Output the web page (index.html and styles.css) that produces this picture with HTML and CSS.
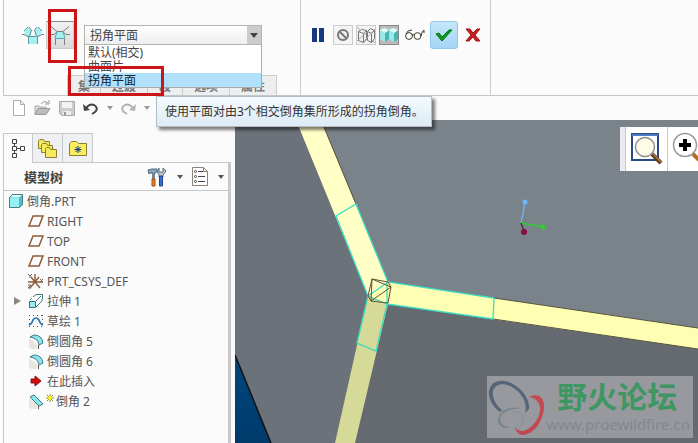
FILE: index.html
```
<!DOCTYPE html>
<html lang="zh-CN">
<head>
<meta charset="utf-8">
<title>倒角.PRT</title>
<link rel="stylesheet" href="styles.css">
</head>

<body>
<div id="main">

<!-- ribbon -->
<div class="ribbon">
	<div class="panel">
		<div class="controls">
			<button class="tool corner" title="默认">
				<svg width="22" height="18" viewBox="0 0 22 18"><g fill="#a5f0f2"><path d="M2 5l4-4 4 4-2 6-4-1z"/><path d="M20 5l-4-4-4 4 2 6 4-1z"/><path d="M7 10h8v8H7z"/></g><g fill="none" stroke="#5d9aa0"><path d="M2 5l4-4M20 5l-4-4M6.500 10.500h8M6.500 10v8M15.500 10v8M9 5L7.500 10M13 5l1.500 5"/><path d="M0 8.500h2l4 2M22 8.500h-2l-4 2M7 1l3 4M15 1l-3 4" stroke="#6c8286"/></g></svg>
			</button>
			<button class="tool pressed" title="拐角">
				<svg width="20" height="20" viewBox="0 0 20 20"><path d="M7 7h6l3 6H4z" fill="#a5f0f2"/><g fill="none" stroke="#7b7f80"><path d="M1 1.500l6 5h6l6-5"/><path d="M0 9.500h4l3-2.500M20 9.500h-4L13 7"/><path d="M5.500 20v-6.500h9V20"/></g><path d="M7 7l-2 6M13 7l2 6M6 13.500h8" stroke="#58a9b0"/></svg>
			</button>
			<div class="combo">
				<select aria-label="过渡类型">
					<option>拐角平面</option>
					<option>默认(相交)</option>
					<option>曲面片</option>
				</select>
				<ul class="list" role="listbox" aria-label="过渡类型列表">
					<li role="option">默认(相交)</li>
					<li role="option">曲面片</li>
					<li role="option" class="on" aria-selected="true">拐角平面</li>
				</ul>
			</div>
		</div>
		<div class="tabs">
			<button>集</button><button>过渡</button><button>段</button><button>选项</button><button>属性</button>
		</div>
	</div>
	<div class="panel actions">
		<button class="tool wide" title="暂停"><svg width="12" height="14"><path d="M0 0h5v14H0zM7 0h5v14H7z" fill="#15387f"/></svg></button>
		<button class="tool box" title="无预览"><svg width="14" height="14" viewBox="0 0 14 14"><g fill="none" stroke="#777" stroke-width="2"><circle cx="7" cy="7" r="5"/><path d="M3.500 3.500l7 7"/></g></svg></button>
		<button class="tool box" title="分离"><svg width="18" height="18" viewBox="0 0 18 18"><g fill="none" stroke="#777"><path d="M1.500 5.500l3-2 5 1v9l-3 3-5-2zM1.500 5.500l5 2 3-3M6.500 7.500v9M10.500 5.500l3-3 4 2v8l-3 4-4-2zM10.500 5.500l4 2 3-3M14.500 7.500v9"/><path d="M0 15l10-9M8 14L18 3M0 1l3 3M15 14l3 3" stroke="#aaa"/></g></svg></button>
		<button class="tool box down" title="附加"><svg width="18" height="16" viewBox="0 0 18 16"><path d="M0 3l5 3v9l-5-3zM9 3l5 3v9l-5-3z" fill="#9fe6e6"/><path d="M5 6l4-3v9l-4 3zM14 6l4-3v9l-4 3z" fill="#43b7b3"/><path d="M0 3l4-2 5 2-4 3zM9 3l4-2 5 2-4 3z" fill="#e2ffff"/></svg></button>
		<button class="tool glass" title="预览"><svg width="20" height="14" viewBox="0 0 20 14"><g fill="none" stroke="#3d3a25"><circle cx="4" cy="8" r="3.400"/><circle cx="12.500" cy="8" r="3.400"/><path d="M7 7q1-1 2 0M1 6q1-4 6-4M16 8q1-5 3-6v3"/></g></svg></button>
		<button class="tool ok" title="确定"><svg width="18" height="14" viewBox="0 0 18 14"><path d="M1 6l3-1 3 4 7-7 3 0-10 11z" fill="#0b9a20" stroke="#057412"/></svg></button>
		<button class="tool wide" title="取消"><svg width="16" height="14" viewBox="0 0 16 14"><path d="M1 1h4l3 4 4-4h3l-5 6 5 6h-4l-3-4-4 4H1l5-6z" fill="#c9211e" stroke="#a01414"/></svg></button>
	</div>
	<div class="panel"></div>
	<span class="mark mark1"></span>
	<span class="mark mark2"></span>
	<div class="tip" role="tooltip">使用平面对由3个相交倒角集所形成的拐角倒角。</div>
</div>

<!-- quick access -->
<div class="quick">
	<button class="tool" title="新建"><svg width="14" height="16" viewBox="0 0 14 16"><path d="M1.500 .5h7l4 4v11h-11zM8.500 .5v4h4" fill="#fff" stroke="#aaa"/></svg></button>
	<button class="tool" title="打开"><svg width="17" height="16" viewBox="0 0 17 16"><path d="M1 14V6h4l1 1h6v2" fill="#ddd" stroke="#aaa"/><path d="M1 14.500l3-6h12l-4 6z" fill="#bbb" stroke="#999"/><path d="M7 4q3-4 7-1M15 0v4h-4" fill="none" stroke="#999"/></svg></button>
	<button class="tool" title="保存"><svg width="16" height="16" viewBox="0 0 16 16"><path d="M.5 1.500h15v14H3l-2.500-2z" fill="#ccc" stroke="#aaa"/><path d="M3 2h10v6H3z" fill="#f3f3f3"/><path d="M4 11h8v4H4z" fill="#eee"/><path d="M5 12h2v3H5z" fill="#999"/></svg></button>
	<button class="tool" title="撤消"><svg width="16" height="13" viewBox="0 0 16 13"><path d="M3 6q4-5 8-3 5 3 1 7l-3 2" fill="none" stroke="#444" stroke-width="2"/><path d="M0 2l1 7 6-1z" fill="#444"/></svg></button>
	<button class="drop" title="撤消列表"></button>
	<button class="tool" title="重做"><svg width="16" height="13" viewBox="0 0 16 13"><path d="M13 6q-4-5-8-3-5 3-1 7l3 2" fill="none" stroke="#b4b4b4" stroke-width="2"/><path d="M16 2l-1 7-6-1z" fill="#b4b4b4"/></svg></button>
	<button class="drop" title="重做列表"></button>
</div>

<div class="work">

<!-- model tree -->
<div class="side">
	<div class="sidetabs">
		<button class="cur" title="模型树"><svg width="14" height="19" viewBox="0 0 14 19"><path d="M1.500.5h4v4h-4zM1.500 7.500h4v4h-4zM1.500 14.500h4v4h-4zM9.500 7.500h4v4h-4zM3.500 4.500v3M3.500 11.500v3M5.500 9.500h4" fill="#fff" stroke="#444"/></svg></button>
		<button title="文件夹浏览器"><svg width="19" height="19" viewBox="0 0 19 19"><g fill="#f5ea5c" stroke="#8c8128"><path d="M.5 9.500v-8l1-1h4l1 2h5v7z"/><path d="M3.500 13.500v-8l1-1h4l1 2h5v7z"/><path d="M7.500 18.500v-9l1-1h3l1 2h6v8z"/></g></svg></button>
		<button title="收藏夹"><svg width="18" height="15" viewBox="0 0 18 15"><path d="M.5 14.500v-12l2-2h5l2 2h8v12z" fill="#f7ee62" stroke="#8c8128"/><path d="M9 5v7M5.500 8.500h7M6.500 6l5 5M11.500 6l-5 5" stroke="#173b7c"/></svg></button>
	</div>
	<div class="treebox">
		<div class="treehead">
			<b>模型树</b>
			<button class="tool" title="设置"><svg width="20" height="20" viewBox="0 0 20 20"><path d="M1 3l4-1h5l1 3H8v2H5V5L2 7z" fill="#8caabf" stroke="#4f6676"/><path d="M5 7h3v5H5z" fill="#74889a"/><path d="M5 12h3v7H5z" fill="#e38322" stroke="#a44d1b"/><path d="M12 1v4h4V1l3 3-3 4v2h-4V8L10 4z" fill="#b8c6d0" stroke="#5a6d7a"/><path d="M12.500 9h3v10h-3z" fill="#386ed0" stroke="#27438c"/></svg></button>
			<button class="drop" title="设置列表"></button>
			<button class="tool" title="显示"><svg width="16" height="19" viewBox="0 0 16 19"><path d="M.5.5h11l4 4v14H.5zM11.500.5v4h4" fill="#fff" stroke="#8c8478"/><path d="M6 4.500h5M6 9.500h7M6 14.500h7" stroke="#444"/><g fill="none" stroke="#444"><circle cx="3.500" cy="4.500" r="1"/><circle cx="3.500" cy="9.500" r="1"/><circle cx="3.500" cy="14.500" r="1"/></g></svg></button>
			<button class="drop" title="显示列表"></button>
		</div>
		<ul class="tree">
			<li class="root"><svg width="14" height="14" viewBox="0 0 14 14"><path d="M.5 3.500l3-3h10v10l-3 3H.5z" fill="#51bcc4" stroke="#467e85"/><path d="M1 4h9v9H1z" fill="#93f0f4"/><path d="M1 3.500l3-2.500h9l-3 2.500z" fill="#ddffff"/></svg>倒角.PRT</li>
			<li><svg width="16" height="14" viewBox="0 0 16 14"><path d="M1 12L5 2h10l-4 10z" fill="none" stroke="#8d5b38" stroke-width="1.500"/></svg>RIGHT</li>
			<li><svg width="16" height="14" viewBox="0 0 16 14"><path d="M1 12L5 2h10l-4 10z" fill="none" stroke="#8d5b38" stroke-width="1.500"/></svg>TOP</li>
			<li><svg width="16" height="14" viewBox="0 0 16 14"><path d="M1 12L5 2h10l-4 10z" fill="none" stroke="#8d5b38" stroke-width="1.500"/></svg>FRONT</li>
			<li><svg width="16" height="16" viewBox="0 0 16 16"><g fill="none" stroke="#8d5b38" stroke-width="1.400"><path d="M7 9V1M0 9h15M2 15l9-11M3 4l9 11"/></g><path d="M0 1l2 2 2-2M2 3v2M12 6l3 3M15 6l-3 3M0 12h3l-3 3h3" fill="none" stroke="#665"/></svg>PRT_CSYS_DEF</li>
			<li><i class="more"></i><svg width="16" height="16" viewBox="0 0 16 16"><path d="M1.500 8.500h6v6h-6z" fill="#9deaf0" stroke="#24747c"/><path d="M2 7l2-2M8 14l6-6V6M8 8l5-5M5 4l3-2.500h6.500V6" fill="none" stroke="#4a777b"/></svg>拉伸 1</li>
			<li><svg width="16" height="14" viewBox="0 0 16 14"><path d="M1 1.500h14M1 12.500h14M1.500 1v12M14.500 1v12" stroke="#456" stroke-dasharray="1 3"/><path d="M1 11q3-1 4-5 3-4 6 0 1 4 4 5" fill="none" stroke="#2775b4" stroke-width="1.600"/></svg>草绘 1</li>
			<li><svg width="16" height="15" viewBox="0 0 16 15"><path d="M1 4l8 6v5H3l-2-2z" fill="#e8e6dc"/><path d="M2 3l4-2q8 0 9 8l-4 2Q10 4 2 3z" fill="#8ce5ec" stroke="#3f7c84"/><path d="M10.500 11v4" stroke="#555"/></svg>倒圆角 5</li>
			<li><svg width="16" height="15" viewBox="0 0 16 15"><path d="M1 4l8 6v5H3l-2-2z" fill="#e8e6dc"/><path d="M2 3l4-2q8 0 9 8l-4 2Q10 4 2 3z" fill="#8ce5ec" stroke="#3f7c84"/><path d="M10.500 11v4" stroke="#555"/></svg>倒圆角 6</li>
			<li><svg width="16" height="12" viewBox="0 0 16 12"><path d="M3 4h4V1l6 5-6 5V8H3z" fill="#d30d0d" stroke="#8c1010"/></svg>在此插入</li>
			<li class="tight"><svg width="16" height="15" viewBox="0 0 16 15"><path d="M1 4l8 6v5H3l-2-2z" fill="#e8e6dc"/><path d="M2 3l4-2 9 9-4 2z" fill="#8ce5ec" stroke="#3f7c84"/><path d="M10.500 11v4" stroke="#555"/></svg><svg class="new" width="8" height="8" viewBox="0 0 8 8"><path d="M4 0v8M0 4h8M1 1l6 6M7 1L1 7" stroke="#8f8a12"/><circle cx="4" cy="4" r="2" fill="#fff21a"/></svg>倒角 2</li>
		</ul>
	</div>
</div>

<!-- graphics window -->
<div class="view">
	<svg class="scene" viewBox="235 120 463 323" preserveAspectRatio="xMidYMid slice">
		<defs>
			<linearGradient id="sea" x1="0" y1="0" x2="0" y2="1"><stop offset="0" stop-color="#00487f"/><stop offset="1" stop-color="#003a6b"/></linearGradient>
		</defs>
		<path d="M235 120h463v323H235z" fill="#6c7279"/>
		<path d="M310 120h388v218L380 292z" fill="#7b838a"/>
		<path d="M378 292l320 46v105H345z" fill="#646a70"/>
		<path d="M235 355l36 88h-36z" fill="url(#sea)"/>
		<path d="M235 355l36 88" stroke="#111" stroke-width="1.500"/>
		<path d="M296 120h25l66 160 1 12-20 4z" fill="#ffffc6"/>
		<path d="M387 282l311 46v21l-311-45-18-8z" fill="#ffffb4"/>
		<path d="M368 296l20 8-33 139h-20z" fill="#d6da98"/>
		<path d="M321 120l35 84M494 298l204 30M493 319l205 30" stroke="#55543f" fill="none"/>
		<g fill="none" stroke="#3cdcc4" stroke-width="1.300">
			<path d="M368 296l-32-80 20-12 32 78 106 16-1 21-106-15-11 47-19-8z"/>
			<path d="M368 296l20-14M368 296l19 8V282"/>
		</g>
		<path d="M372 279l19 8-3 16-17-2-3-5zM372 279l-1 22 20-14M372 279l16 3 3 5" fill="none" stroke="#5f5135"/>
		<g stroke-width="1.300">
			<path d="M521 223l4-20" stroke="#6db7f5"/><circle cx="525" cy="202" r="2.500" fill="#6db7f5"/>
			<path d="M521 223l22 4" stroke="#2ed02e"/><circle cx="543" cy="227" r="2.500" fill="#2ed02e"/>
			<path d="M521 223l3 8" stroke="#333"/><circle cx="524" cy="232" r="3" fill="#8e0a46"/>
		</g>
	</svg>
	<div class="viewbar">
		<button title="重新调整"><svg width="34" height="34" viewBox="0 0 34 34"><path d="M2 2h26v26H2z" fill="#fff" stroke="#274a86" stroke-width="2"/><path d="M2 2h26v2H2z" fill="#4e79c4"/><path d="M22 22l9 9" stroke="#5d3a1c" stroke-width="4"/><path d="M23 22l8 8" stroke="#b07b45" stroke-width="1.500"/><circle cx="15" cy="15" r="9.500" fill="#fffdea" stroke="#8f8f8f" stroke-width="1.500"/></svg></button>
		<button title="放大"><svg width="34" height="34" viewBox="0 0 34 34"><path d="M21 22l9 9" stroke="#b06f24" stroke-width="4"/><circle cx="13" cy="13" r="11.500" fill="#fff" stroke="#999" stroke-width="1.500"/><path d="M13 7v12M7 13h12" stroke="#000" stroke-width="4"/></svg></button>
	</div>
	<div class="logo">
		<svg width="58" height="58" viewBox="0 0 58 58">
			<path fill="#566577" fill-rule="evenodd" d="M1 13C3 2 14 0 25 6c11 6 17 17 16 25l-4 4c3-10-3-20-13-26C15 4 7 6 5 13c-1 7 3 14 9 19l-2 2C4 28 0 20 1 13z"/>
			<path fill="#bf4a50" d="M41 19c8-4 15-1 15 9 0 15-11 29-21 29-4 0-7-3-8-8 3 4 7 5 11 3 9-4 15-15 14-23-1-6-5-9-11-10z"/>
			<path fill="#75878c" d="M33 31c-8-1-17 2-20 7-3 6 2 11 10 11-8 3-14-2-13-8 2-9 13-14 23-10z"/>
			<path d="M24 34q10-2 11 7 0 6-4 9" fill="none" stroke="#84918f"/>
		</svg>
		<div><strong>野火论坛</strong><span>www.proewildfire.cn</span></div>
	</div>
</div>

</div>
</div>
</body>
</html>
```
FILE: styles.css
```
html, body {
	margin: 0;
	padding: 0;
	height: 100%;
}
body {
	font-family: "Noto Sans", "Noto Sans CJK SC", sans-serif;
	font-size: 12px;
	color: #555;
	background: #fbfbfb;
	overflow: hidden;
}
button {
	font-family: inherit;
	font-size: 12px;
	margin: 0;
	padding: 0;
	border: 0;
	background: none;
	color: #555;
}
button, .tree li {
	display: flex;
	align-items: center;
	justify-content: center;
}
svg {
	flex: none;
}
ul {
	list-style: none;
	margin: 0;
	padding: 0;
}
#main {
	display: flex;
	flex-direction: column;
	height: 100%;
}

/* ribbon */
.ribbon {
	position: relative;
	display: grid;
	grid-template-columns: 297px 190px 1fr;
	height: 95px;
	margin-left: 3px;
	border-left: 1px solid #c4c8c8;
	border-bottom: 1px solid #c4c8c8;
}
.panel {
	display: flex;
	flex-direction: column;
	justify-content: space-between;
	border-right: 1px solid #ccc;
}
.panel:nth-child(3) {
	border-right: 0;
}
.controls {
	display: flex;
	align-items: center;
	height: 28px;
	padding: 21px 0 0 16px;
}
.corner {
	width: 26px;
}
.pressed {
	width: 28px;
	height: 28px;
	margin-right: 10px;
	border: 1px solid #ccc;
	border-top: 1px solid #888;
	background: linear-gradient(#f2f2f2, #d9d9d9);
}
.combo {
	position: relative;
	width: 178px;
}
.combo select {
	display: block;
	appearance: none;
	width: 100%;
	height: 20px;
	padding: 0 0 0 5px;
	border: 1px solid #b4b4b4;
	border-radius: 0;
	font-family: inherit;
	font-size: 12px;
	color: #444;
	background: linear-gradient(#ccc, #ccc) right / 14px 100% no-repeat, linear-gradient(#fff, #eee);
}
.combo:after {
	content: "";
	position: absolute;
	right: 4px;
	top: 8px;
	border: 4px solid transparent;
	border-top: 5px solid #444;
	border-bottom: 0;
}
.list {
	position: absolute;
	z-index: 2;
	top: 20px;
	left: 0;
	right: 0;
	border: 1px solid #aaa;
	border-top: 0;
	background: #fff;
	color: #444;
}
.list li {
	height: 14px;
	line-height: 15px;
	padding-left: 3px;
}
.list .on {
	background: #b0e0fa;
	color: #123;
}
.tabs {
	display: flex;
	margin-left: 63px;
}
.tabs button {
	height: 20px;
	padding: 0 11px;
	border: 1px solid #ccc;
	border-width: 1px 1px 0 0;
	background: #eceeef;
	font-weight: bold;
	color: #777;
}
.tabs button:first-child {
	padding: 0 10px;
	border-left-width: 1px;
}
.actions {
	flex-direction: row;
	justify-content: flex-start;
	align-items: center;
	gap: 3px;
	height: 28px;
	padding: 21px 0 46px 5px;
}
.wide {
	width: 24px;
}
.box {
	width: 20px;
	height: 20px;
	border: 1px solid #ccc;
	background: #f3f3f3;
}
.down {
	border-color: #888;
	background: #bbb;
}
.glass {
	width: 25px;
}
.ok {
	width: 28px;
	height: 28px;
	border: 1px solid #8fc6ea;
	border-radius: 3px;
	background: linear-gradient(#c6e6fa, #a3d5f5);
}

/* red frames and tooltip lie over the ribbon */
.mark {
	position: absolute;
	z-index: 3;
	box-sizing: border-box;
	border: 3px solid #cb1518;
}
.mark1 {
	left: 44px;
	top: 9px;
	width: 29px;
	height: 54px;
}
.mark2 {
	left: 64px;
	top: 66px;
	width: 96px;
	height: 30px;
}
.tip {
	position: absolute;
	z-index: 4;
	left: 152px;
	top: 96px;
	height: 29px;
	line-height: 29px;
	padding: 0 7px 0 8px;
	border: 1px solid #b5bcc2;
	background: linear-gradient(#f5fafd, #dcebf5);
	box-shadow: 3px 3px 3px rgba(0, 0, 0, .5);
	color: #333;
	white-space: nowrap;
}

/* quick access */
.quick {
	display: flex;
	align-items: center;
	gap: 8px;
	height: 24px;
	padding-left: 12px;
}
.drop {
	width: 5px;
	height: 16px;
}
.drop:before {
	content: "";
	border: 3px solid transparent;
	border-top: 4px solid #555;
	border-bottom: 0;
}
.quick .drop:before {
	border-top-color: #999;
}

.work {
	display: flex;
	flex: 1;
	min-height: 0;
}

/* model tree */
.side {
	display: flex;
	flex-direction: column;
	width: 228px;
	padding: 13px 4px 0 3px;
	flex: none;
}
.sidetabs {
	display: flex;
}
.sidetabs button {
	width: 30px;
	height: 29px;
	border: 1px solid #c4c8c8;
	border-width: 1px 1px 0 0;
	background: #eef0f3;
}
.sidetabs .cur {
	z-index: 1;
	height: 30px;
	margin-bottom: -1px;
	border-left-width: 1px;
	background: #fbfbfb;
}
.treebox {
	flex: 1;
	border-left: 1px solid #c4c8c8;
	border-right: 3px solid #c8c8c8;
}
.treehead {
	display: flex;
	align-items: center;
	height: 27px;
	padding: 0 5px 0 20px;
	border-top: 1px solid #c4c8c8;
	border-bottom: 1px solid #c4c8c8;
	gap: 10px;
}
.treehead b {
	flex: 1;
	font-size: 13px;
	color: #444;
}
.tree li {
	position: relative;
	justify-content: flex-start;
	height: 20px;
	padding-left: 24px;
	gap: 3px;
}
.tree .root {
	padding-left: 5px;
	gap: 4px;
}
.tree .tight {
	gap: 2px;
}
.tree .new {
	margin-bottom: 6px;
}
.more {
	position: absolute;
	left: 10px;
	border: 4px solid transparent;
	border-left: 7px solid #888;
	border-right: 0;
}

/* graphics window */
.view {
	position: relative;
	flex: 1;
	overflow: hidden;
	background: #6c7279;
}
.scene {
	display: block;
	width: 100%;
	height: 100%;
}
.viewbar {
	position: absolute;
	top: 7px;
	right: 0;
	display: flex;
	width: 73px;
	height: 44px;
	overflow: hidden;
	border-left: 5px solid #e9ebee;
	background: #fff;
}
.viewbar button {
	flex: none;
	width: 42px;
	border-left: 1px solid #c4c8d4;
}
.logo {
	position: absolute;
	right: 5px;
	bottom: 5px;
	display: flex;
	align-items: center;
	height: 62px;
	padding: 0 3px 0 1px;
	background: #98999e;
}
.logo strong, .logo span {
	display: block;
}
.logo strong {
	padding-left: 11px;
	font-size: 30px;
	line-height: 34px;
	color: #3f9663;
}
.logo span {
	font-size: 15px;
	line-height: 20px;
	color: #7f888e;
}
```
